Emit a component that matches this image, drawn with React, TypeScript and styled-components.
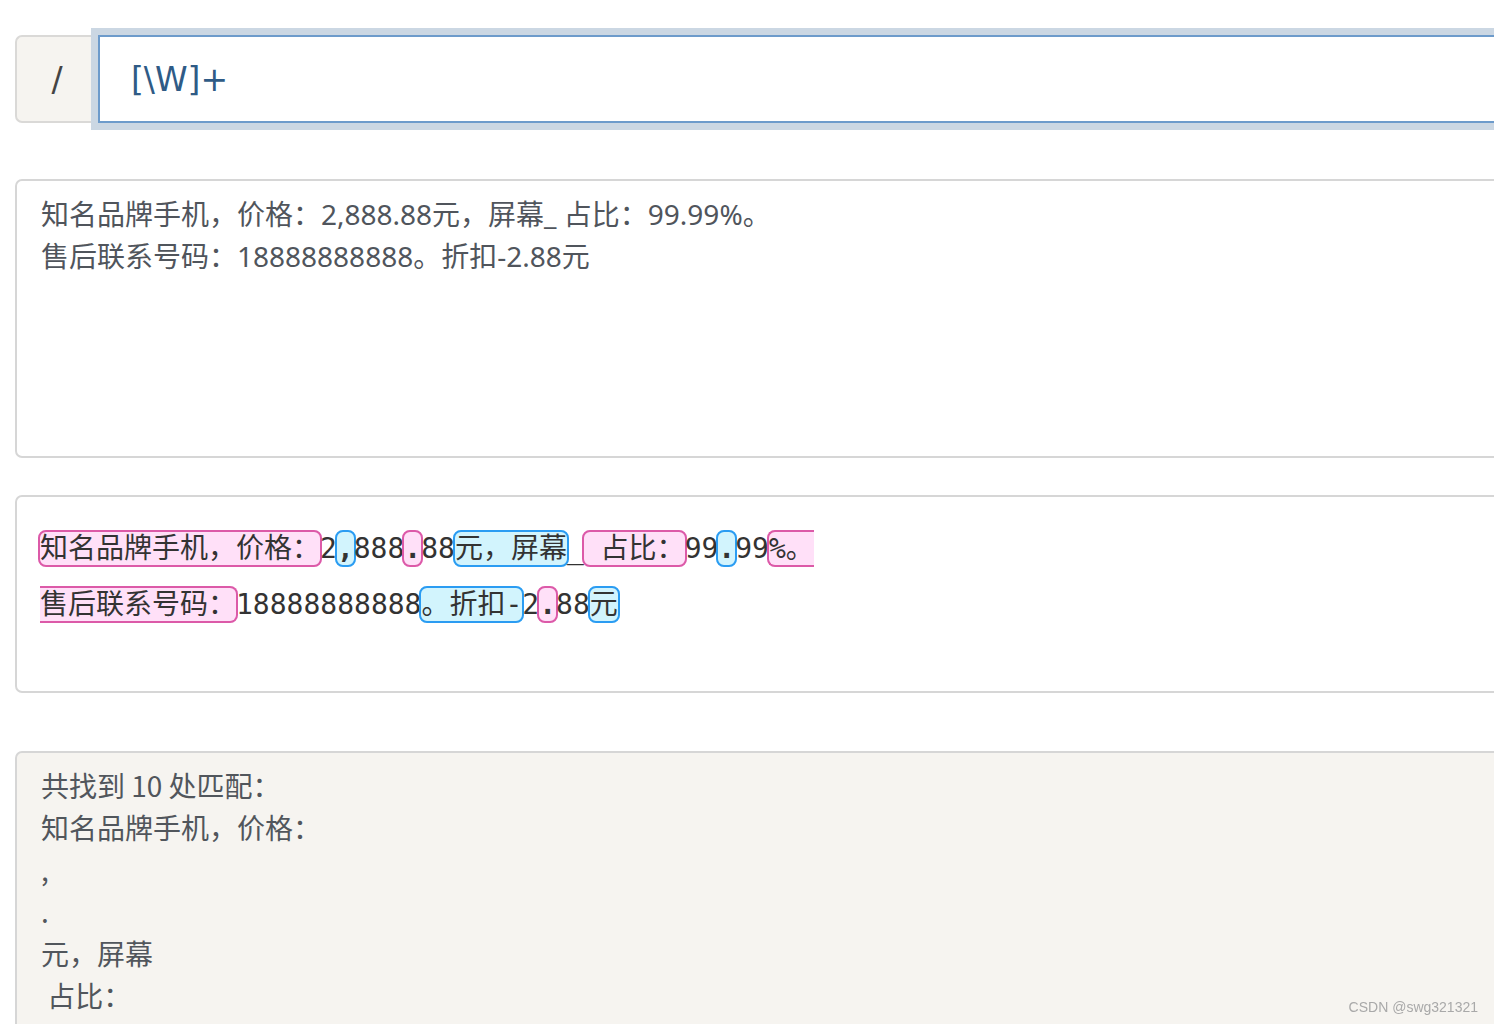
import { Fragment } from "react";
import styled, { createGlobalStyle } from "styled-components";

const GlobalStyle = createGlobalStyle`
  html, body {
    margin: 0;
    padding: 0;
    overflow: hidden;
    background: #ffffff;
  }
`;

const SOURCE = "知名品牌手机，价格：2,888.88元，屏幕_ 占比：99.99%。\n售后联系号码：18888888888。折扣-2.88元";
const PATTERN = "[\\W]+";

type Piece = { text: string; match: boolean; index: number; openLeft: boolean; openRight: boolean };

const Page = styled.div`
  width: 1620px;
  padding: 28px 0 40px 15px;
  display: flex;
  flex-direction: column;
  font-family: "Noto Sans CJK SC", "Noto Sans", sans-serif;
`;

const InputGroup = styled.div`
  display: flex;
  height: 88px;
  margin-top: 7px;
`;

const Addon = styled.div`
  width: 76px;
  flex: none;
  box-sizing: border-box;
  display: flex;
  align-items: center;
  justify-content: center;
  padding-left: 6px;
  background: #f6f4f0;
  border: 2px solid #dad9d7;
  border-right: none;
  border-radius: 7px 0 0 7px;
  font-family: "DejaVu Sans", sans-serif;
  font-size: 33px;
  color: #444444;
`;

const RegexInput = styled.div`
  flex: 1;
  margin-left: 7px;
  box-sizing: border-box;
  display: flex;
  align-items: center;
  padding-left: 31px;
  border: 2px solid #6d9bcb;
  box-shadow: 0 0 0 7px #cbd7e3;
  background: #ffffff;
  font-family: "DejaVu Sans", sans-serif;
  font-size: 33px;
  color: #2f5b86;
`;

const Panel = styled.div<{ $height: number; $tinted?: boolean; $gap: number }>`
  box-sizing: border-box;
  height: ${({ $height }) => $height}px;
  margin-top: ${({ $gap }) => $gap}px;
  border: 2px solid #d6d6d6;
  border-radius: 7px;
  background: ${({ $tinted }) => ($tinted ? "#f6f4f0" : "#ffffff")};
`;

const PlainText = styled.div`
  padding: 12px 24px;
  font-family: "Noto Sans", "Noto Sans CJK SC", sans-serif;
  font-size: 28px;
  line-height: 42px;
  color: #50555c;
  white-space: pre-wrap;
`;

const Highlighted = styled.div`
  padding: 24px 23px;
  font-family: "DejaVu Sans Mono", "Noto Sans CJK SC", monospace;
  font-size: 28px;
  color: #333333;
`;

const HighlightRow = styled.div`
  height: 56px;
  line-height: 56px;
  white-space: pre;
`;

// borders sit outside the glyphs: negative margins keep the text where it was
const Mark = styled.span<{ $alt: boolean; $openLeft: boolean; $openRight: boolean; $bold: boolean }>`
  border: 2px solid ${({ $alt }) => ($alt ? "#2b9cf2" : "#dc5aa8")};
  border-left-width: ${({ $openLeft }) => ($openLeft ? 0 : 2)}px;
  border-right-width: ${({ $openRight }) => ($openRight ? 0 : 2)}px;
  margin-left: ${({ $openLeft }) => ($openLeft ? 0 : -2)}px;
  margin-right: ${({ $openRight }) => ($openRight ? 0 : -2)}px;
  border-radius: ${({ $openLeft, $openRight }) =>
    `${$openLeft ? 0 : 8}px ${$openRight ? 0 : 8}px ${$openRight ? 0 : 8}px ${$openLeft ? 0 : 8}px`};
  background: ${({ $alt }) => ($alt ? "#d2f4fd" : "#ffe0f8")};
  font-weight: ${({ $bold }) => ($bold ? "bold" : "normal")};
`;

const ResultText = styled.div`
  padding: 11px 24px;
  font-size: 28px;
  line-height: 42px;
  color: #51565c;
  white-space: pre-wrap;
`;

const Watermark = styled.div`
  position: fixed;
  right: 16px;
  bottom: 9px;
  font-family: "Liberation Sans", Arial, sans-serif;
  font-size: 14px;
  color: #a9a9a9;
`;

function splitMatches(text: string, pattern: string) {
  const re = new RegExp(pattern, "g");
  const parts: { text: string; match: boolean; index: number }[] = [];
  let last = 0;
  let n = 0;
  for (const m of text.matchAll(re)) {
    const start = m.index ?? 0;
    if (start > last) parts.push({ text: text.slice(last, start), match: false, index: -1 });
    parts.push({ text: m[0], match: true, index: n++ });
    last = start + m[0].length;
  }
  if (last < text.length) parts.push({ text: text.slice(last), match: false, index: -1 });
  return parts;
}

// break the pieces at newlines so each line is its own row
function toLines(parts: ReturnType<typeof splitMatches>) {
  const lines: Piece[][] = [[]];
  parts.forEach((part) => {
    const chunks = part.text.split("\n");
    chunks.forEach((chunk, ci) => {
      if (ci > 0) lines.push([]);
      if (chunk === "") return;
      lines[lines.length - 1].push({
        text: chunk,
        match: part.match,
        index: part.index,
        openLeft: ci > 0,
        openRight: ci < chunks.length - 1,
      });
    });
  });
  return lines;
}

export default function App() {
  const parts = splitMatches(SOURCE, PATTERN);
  const matches = parts.filter((p) => p.match).map((p) => p.text);
  const lines = toLines(parts);

  return (
    <>
      <GlobalStyle />
      <Page>
        <InputGroup>
          <Addon>/</Addon>
          <RegexInput>{PATTERN}</RegexInput>
        </InputGroup>

        <Panel $height={279} $gap={56}>
          <PlainText>{SOURCE}</PlainText>
        </Panel>

        <Panel $height={198} $gap={37}>
          <Highlighted>
            {lines.map((line, li) => (
              <HighlightRow key={li}>
                {line.map((piece, pi) =>
                  piece.match ? (
                    <Mark
                      key={pi}
                      $alt={piece.index % 2 === 1}
                      $openLeft={piece.openLeft}
                      $openRight={piece.openRight}
                      $bold={/^[.,]$/.test(piece.text)}
                    >
                      {piece.text}
                    </Mark>
                  ) : (
                    <Fragment key={pi}>{piece.text}</Fragment>
                  )
                )}
              </HighlightRow>
            ))}
          </Highlighted>
        </Panel>

        <Panel $height={320} $gap={58} $tinted>
          <ResultText>
            {`共找到 ${matches.length} 处匹配：\n`}
            {matches.join("\n")}
          </ResultText>
        </Panel>
      </Page>
      <Watermark>CSDN @swg321321</Watermark>
    </>
  );
}
